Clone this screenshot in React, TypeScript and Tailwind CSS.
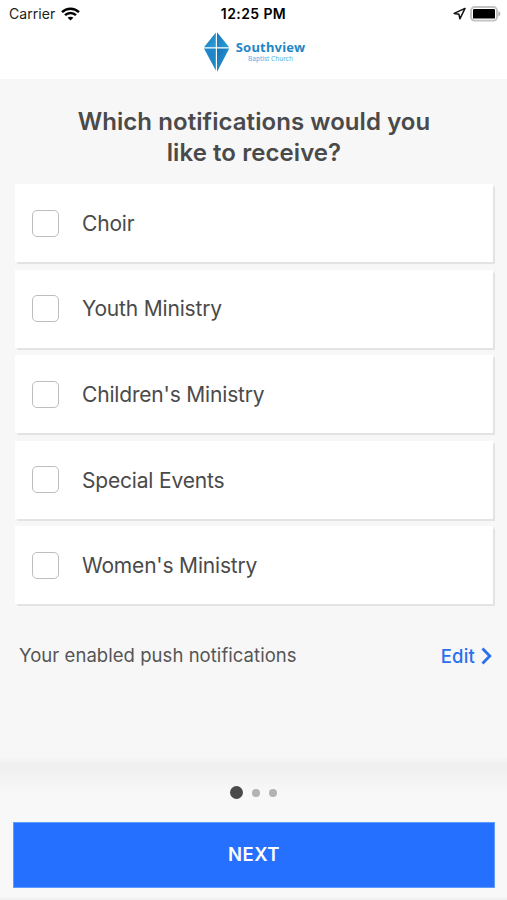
import React from 'react';

interface Channel {
  id: string;
  label: string;
}

const channels: Channel[] = [
  { id: 'choir', label: 'Choir' },
  { id: 'youth', label: 'Youth Ministry' },
  { id: 'children', label: "Children's Ministry" },
  { id: 'events', label: 'Special Events' },
  { id: 'women', label: "Women's Ministry" },
];

function WifiIcon() {
  return (
    <svg width="19" height="14" viewBox="0 0 19 14" fill="none" stroke="#000" strokeWidth="2.5">
      <path d="M1 5.1C5.8.5 13.2.5 18 5.1" />
      <path d="M4 8.2c3.1-2.9 7.9-2.9 11 0" />
      <path d="M9.5 13.6 6.6 10.8c1.6-1.5 4.2-1.5 5.8 0z" fill="#000" stroke="none" />
    </svg>
  );
}

function StatusBar() {
  return (
    <div className="grid h-7 grid-cols-3 items-center text-[14px] leading-7 text-black">
      <div className="flex items-center gap-1.5 pl-[9px]">
        <span className="tracking-[0.05px] text-[#222]">Carrier</span>
        <WifiIcon />
      </div>
      <div className="text-center font-semibold tracking-[0.4px] whitespace-nowrap">12:25 PM</div>
      <div className="flex items-center justify-end gap-[4px] pr-[6px]">
        <svg className="-mt-[2px]" width="13" height="13" viewBox="0 0 13 13" fill="none" stroke="#111" strokeWidth="1.5" strokeLinejoin="round">
          <path d="M12 1.4 1.2 6.4l4.7.8 1 4.6z" />
        </svg>
        <svg className="-mt-[1px]" width="31" height="16" viewBox="0 0 31 16">
          <rect x="1" y="1" width="26" height="13.6" rx="3.6" fill="#fff" stroke="#c2c2c2" strokeWidth="1.9" />
          <rect x="3" y="3" width="22" height="9.6" rx="1.2" fill="#000" />
          <path d="M28.4 5.2c2.6 1 2.6 4.2 0 5.2z" fill="#b0b0b0" />
        </svg>
      </div>
    </div>
  );
}

function Logo() {
  return (
    <div className="flex pl-[203px]">
      <svg className="mt-[3px]" width="27" height="42" viewBox="0 0 27 42">
        <defs>
          <linearGradient id="kite" x1="0" y1="0" x2="1" y2="1">
            <stop offset="0" stopColor="#1273b8" />
            <stop offset="1" stopColor="#2f9fda" />
          </linearGradient>
        </defs>
        <path d="M12.8 1.6V16.2H1z" fill="url(#kite)" />
        <path d="M14 1.2v15h12.2z" fill="url(#kite)" />
        <path d="M1 17.6h11.8v22z" fill="#1f87c8" />
        <path d="M14 17.6h12.2L14 41z" fill="url(#kite)" />
      </svg>
      <div className="ml-[5px] flex w-[71px] flex-col items-center pt-[11px] font-['Noto_Sans']">
        <span className="text-[13px] leading-[16px] font-bold tracking-[0.2px] whitespace-nowrap text-[#1f86c6]">Southview</span>
        <span className="text-[6.5px] leading-[8px] whitespace-nowrap text-[#4fb2e4]">Baptist Church</span>
      </div>
    </div>
  );
}

function ChannelCard({ label }: { label: string }) {
  return (
    <label className="flex h-[78px] items-center bg-white pl-[17px] shadow-[1px_1px_1px_0.5px_#e3e3e3]">
      <input
        type="checkbox"
        className="size-[27px] appearance-none rounded-[5px] border-[1.5px] border-[#bdbdbd] bg-white"
      />
      <span className="ml-[23px] pt-[1px] text-[21px] tracking-[-0.18px] text-[#4a4a4a]">{label}</span>
    </label>
  );
}

export default function App() {
  return (
    <div className="flex h-[900px] w-[507px] flex-col overflow-hidden bg-[#f7f7f7] font-['Inter',sans-serif]">
      <header className="h-[79px] shrink-0 bg-white">
        <StatusBar />
        <Logo />
      </header>

      <main className="flex h-[677px] shrink-0 flex-col pt-[27px] pr-[14px] pl-[15px]">
        <h1 className="text-center text-[24px] leading-[31px] font-semibold tracking-[0.07px] whitespace-nowrap text-[#4a4a4a]">
          Which notifications would you
          <br />
          like to receive?
        </h1>
        <div className="mt-4 flex flex-col gap-[7.6px]">
          {channels.map((channel) => (
            <ChannelCard key={channel.id} label={channel.label} />
          ))}
        </div>
        <div className="mt-[36px] flex items-center justify-between pr-px pl-[4px] text-[18.5px] leading-7">
          <span className="tracking-[0.05px] text-[#555]">Your enabled push notifications</span>
          <a className="flex items-center gap-1.5 pt-[2px] font-medium tracking-[0.2px] text-[#2a70ec]">
            Edit
            <svg width="11" height="18" viewBox="0 0 11 18" fill="none" stroke="#2a70ec" strokeWidth="2.8">
              <path d="m1.5 1.5 7.3 7.5-7.3 7.5" />
            </svg>
          </a>
        </div>
      </main>

      <footer className="flex h-[144px] shrink-0 flex-col bg-[#f8f8f8]">
        <div className="flex h-[66px] items-center justify-center gap-[9px] bg-linear-to-b from-[#f7f7f7] via-[#efefef] via-15% to-[#f8f8f8] to-55% pt-[7px]">
          <span className="size-[13px] rounded-full bg-[#4a4a4a]" />
          <span className="size-2 rounded-full bg-[#b3b3b3]" />
          <span className="size-2 rounded-full bg-[#b3b3b3]" />
        </div>
        <button className="mr-[12px] ml-[13px] h-[66px] border border-[#5f9cff] bg-[#2570ff] text-[18.5px] font-semibold tracking-[0.5px] text-white">
          NEXT
        </button>
        <div className="mt-auto h-[2px] bg-[#f0f0f0]" />
      </footer>
    </div>
  );
}
